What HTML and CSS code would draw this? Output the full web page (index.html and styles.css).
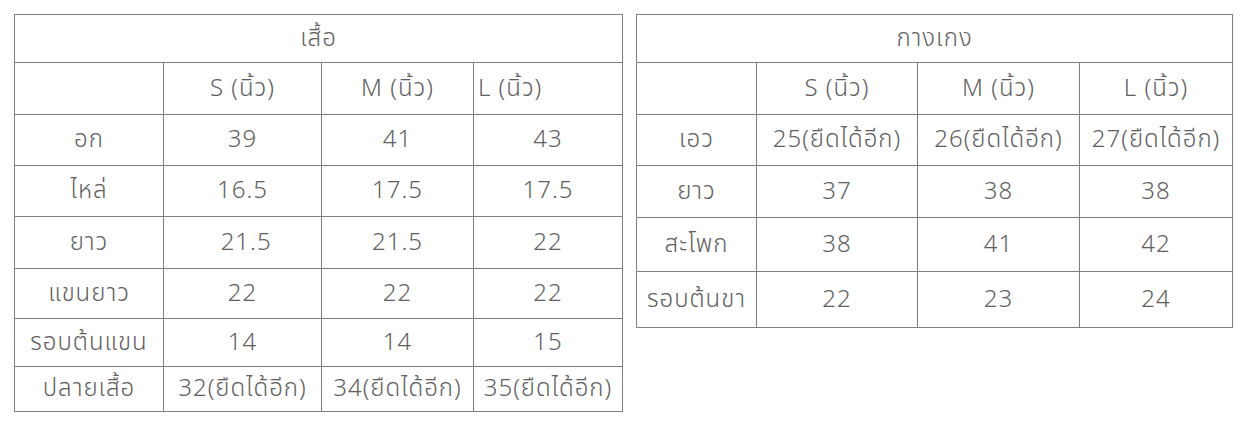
FILE: index.html
```html
<!DOCTYPE html>
<html lang="th">
<head>
<meta charset="utf-8">
<link rel="stylesheet" href="styles.css">
</head>
<body>
<div class="page">
  <table class="size t1">
    <colgroup><col class="c1a"><col class="c1b"><col class="c1c"><col class="c1d"></colgroup>
    <tr class="h48"><td colspan="4">เสื้อ</td></tr>
    <tr class="h52"><td></td><td>S (นิ้ว)</td><td>M (นิ้ว)</td><td class="left">L (นิ้ว)</td></tr>
    <tr class="h51"><td>อก</td><td>39</td><td>41</td><td>43</td></tr>
    <tr class="h51"><td>ไหล่</td><td>16.5</td><td>17.5</td><td>17.5</td></tr>
    <tr class="h52"><td>ยาว</td><td>&nbsp;21.5</td><td>21.5</td><td>22</td></tr>
    <tr class="h50"><td>แขนยาว</td><td>22</td><td>22</td><td>22</td></tr>
    <tr class="h48"><td>รอบต้นแขน</td><td>14</td><td>14</td><td>15</td></tr>
    <tr class="h45"><td>ปลายเสื้อ</td><td>32(ยืดได้อีก)</td><td>34(ยืดได้อีก)</td><td>35(ยืดได้อีก)</td></tr>
  </table>
  <table class="size t2">
    <colgroup><col class="c2a"><col class="c2b"><col class="c2c"><col class="c2d"></colgroup>
    <tr class="h48"><td colspan="4">กางเกง</td></tr>
    <tr class="h52"><td></td><td>S (นิ้ว)</td><td>M (นิ้ว)</td><td>L (นิ้ว)</td></tr>
    <tr class="h51"><td>เอว</td><td>25(ยืดได้อีก)</td><td>26(ยืดได้อีก)</td><td>27(ยืดได้อีก)</td></tr>
    <tr class="h52"><td>ยาว</td><td>37</td><td>38</td><td>38</td></tr>
    <tr class="h54"><td>สะโพก</td><td>38</td><td>41</td><td>42</td></tr>
    <tr class="h56"><td>รอบต้นขา</td><td>22</td><td>23</td><td>24</td></tr>
  </table>
</div>
</body>
</html>
```

FILE: styles.css
```css
html, body {
  margin: 0;
  padding: 0;
  background: #ffffff;
}
.page {
  display: flex;
  align-items: flex-start;
  gap: 13px;
  padding: 14px 0 0 14px;
  font-family: "Noto Sans Thai", "Noto Sans", "DejaVu Sans", sans-serif;
  font-weight: 300;
  color: #606060;
  font-size: 24px;
  letter-spacing: 1px;
}
.size {
  border-collapse: collapse;
  table-layout: fixed;
}
.size td {
  border: 1px solid #808080;
  text-align: center;
  vertical-align: middle;
  padding: 0;
  white-space: nowrap;
  line-height: 1;
}
.size td.left { text-align: left; padding-left: 4px; }
.t1 { width: 608px; }
.t2 { width: 596px; }
.c1a { width: 149px; }
.c1b { width: 158px; }
.c1c { width: 152px; }
.c1d { width: 149px; }
.c2a { width: 120px; }
.c2b { width: 161px; }
.c2c { width: 162px; }
.c2d { width: 153px; }
.h45 { height: 45px; }
.h48 { height: 48px; }
.h50 { height: 50px; }
.h51 { height: 51px; }
.h52 { height: 52px; }
.h54 { height: 54px; }
.h56 { height: 56px; }
```
